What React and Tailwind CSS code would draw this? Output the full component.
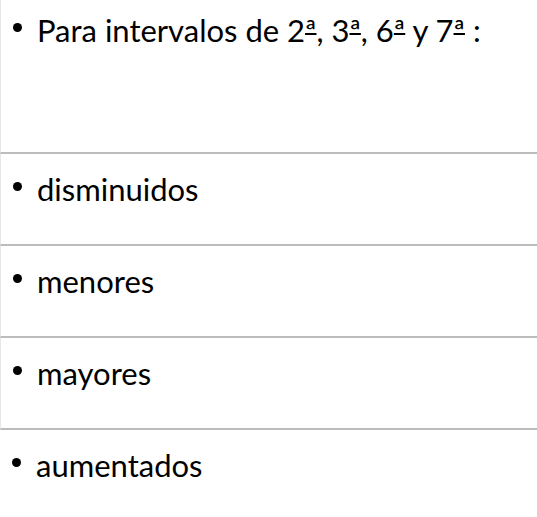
const rows = [
  { text: 'Para intervalos de 2ª, 3ª, 6ª y 7ª :', first: true },
  { text: 'disminuidos' },
  { text: 'menores' },
  { text: 'mayores' },
  { text: 'aumentados', last: true },
]

// ª con subrayado, como en la fuente original
function Text({ text }) {
  return text.split(/(ª)/).map((part, i) =>
    part === 'ª' ? (
      <span key={i} className="underline decoration-2 underline-offset-[-9px]">
        ª
      </span>
    ) : (
      <span key={i}>{part}</span>
    )
  )
}

function Row({ text, first, last }) {
  return (
    <div
      className={`flex items-start pl-[12px] ${first ? 'h-[154px] pt-[12px]' : 'h-[92px] pt-[17px]'} ${
        last ? '' : 'border-b-2 border-[#bcbcbc] border-l border-l-[#e6e6e6]'
      }`}
    >
      <span className="mt-[11px] h-[9px] w-[9px] shrink-0 rounded-full bg-black" />
      <span className="ml-[15px] whitespace-nowrap text-[31px] leading-[36px] text-black">
        <Text text={text} />
      </span>
    </div>
  )
}

export default function App() {
  return (
    <div className="h-[517px] w-[537px] overflow-hidden bg-white font-['Lato',sans-serif]">
      {rows.map((r) => (
        <Row key={r.text} {...r} />
      ))}
    </div>
  )
}
